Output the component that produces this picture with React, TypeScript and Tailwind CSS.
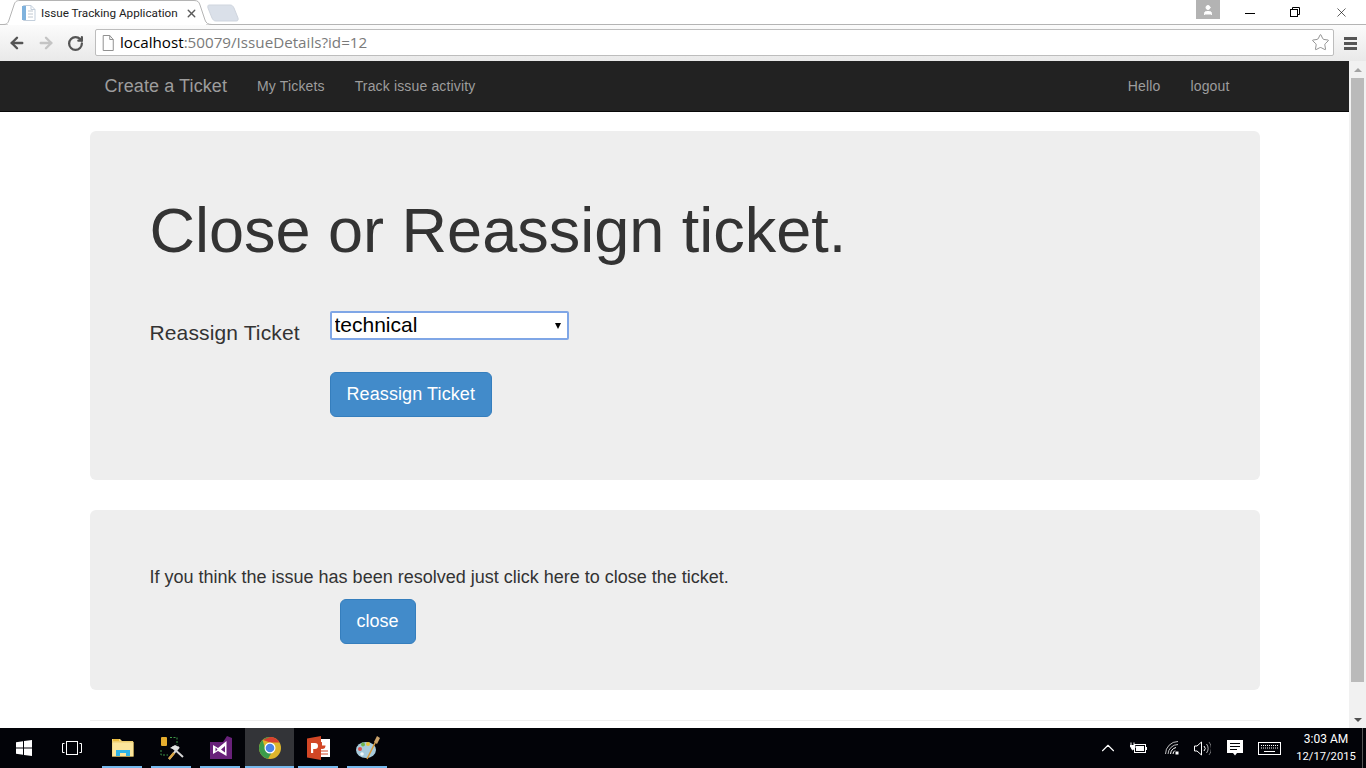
import React from 'react';
import { ArrowLeft, ArrowRight, RotateCw, Star, X, ChevronUp, User } from 'lucide-react';

const sans = "font-['Liberation_Sans',Arial,sans-serif]";

const NAV_LEFT = ['My Tickets', 'Track issue activity'];
const NAV_RIGHT = ['Hello', 'logout'];

const TabShape = () => (
  <svg className="absolute left-0 top-0" width="245" height="25" viewBox="0 0 245 25">
    <path d="M0 24.500 H3 C7 24.500 8 23 9 20 L14 5 C15 2 16 .5 20 .5 H194 C198 .5 199 2 200 5 L205 20 C206 23 208 24.500 212 24.500" fill="#fff" stroke="#b4b4b4" />
    <rect x="8" y="23" width="198" height="2" fill="#fff" />
    <path d="M209 5 H230 C232 5 233 6 234 8 L238 18 C238.500 20 238 21 236 21 H216 C214 21 213 20 212 18 L208 8 C207.500 6 208 5 209 5Z" fill="#dae0e9" stroke="#cfd5de" />
  </svg>
);

const PageFile = ({ blue }: { blue?: boolean }) => (
  <svg width={blue ? 16 : 14} height="16" viewBox="0 0 16 16" preserveAspectRatio="none">
    <path d="M2.500 .5 H10 L14 4.500 V15.500 H2.500Z" fill="#fff" stroke={blue ? '#c3cfdc' : '#8a8a8a'} />
    {blue && <rect x="1" y="1" width="4" height="14" fill="#7fb2dd" />}
    {blue && <path d="M7 6 H12 M7 9 H12 M7 12 H12" stroke="#c0c8d0" />}
    <path d="M10 .5 V4.500 H14" fill="none" stroke={blue ? '#c3cfdc' : '#8a8a8a'} />
  </svg>
);

const WinLogo = () => (
  <svg width="16" height="16" viewBox="0 0 16 16" fill="#fff">
    <path d="M0 2.300 L7 1.300 V7.500 H0Z M8 1.100 L16 0 V7.500 H8Z M0 8.500 H7 V14.700 L0 13.700Z M8 8.500 H16 V16 L8 14.900Z" />
  </svg>
);

const TaskView = () => (
  <svg width="20" height="14" viewBox="0 0 20 14" fill="none" stroke="#fff">
    <rect x="4.500" y=".5" width="11" height="13" />
    <path d="M2.500 2.500 H.5 V11.500 H2.500 M17.500 2.500 H19.500 V11.500 H17.500" />
  </svg>
);

const Explorer = () => (
  <svg width="22" height="20" viewBox="0 0 22 20">
    <path d="M0 1 H8 L10 3 H21 V18 H0Z" fill="#f6d77a" />
    <rect x="0" y="4" width="21.500" height="14.500" fill="#fbe59b" stroke="#d9b650" strokeWidth=".5" />
    <path d="M1 1 H7 V3 H1Z" fill="#e8b93c" />
    <path d="M4 18 V12 H18 V18 H14 V15 H8 V18Z" fill="#2fb3e6" />
  </svg>
);

const BuildTools = () => (
  <svg width="24" height="24" viewBox="0 0 24 24">
    <rect x="1" y="1" width="6" height="9" rx="1" fill="#e5ad2e" />
    <path d="M10 1.500 H17 V9" fill="none" stroke="#3f9a48" strokeDasharray="2 1.500" />
    <path d="M1 14 V19 H8" fill="none" stroke="#3f9a48" strokeDasharray="2 1.500" />
    <path d="M9 23 L19 11 M12 11 L23 21" stroke="#d6d6d6" strokeWidth="2" />
    <path d="M9 23 L14 17" stroke="#d9a441" strokeWidth="2.500" />
    <path d="M10 12 L15 9 L19 11 L16 14Z" fill="#e4e4e4" />
  </svg>
);

const VisualStudio = () => (
  <svg width="22" height="24" viewBox="0 0 22 24">
    <path d="M0 6 H13 L17 0 L22 2 V23 H0Z" fill="#68217a" />
    <path d="M3 9 L8 12 L16.500 5 V20 L8 15 L3 18Z" fill="#fff" />
    <path d="M5.500 11.500 L7.500 13.500 L5.500 15.500Z M15 10 L11 13.500 L15 16.500Z" fill="#68217a" />
  </svg>
);

const ChromeLogo = () => (
  <svg width="22" height="22" viewBox="0 0 22 22">
    <circle cx="11" cy="11" r="11" fill="#ddb52d" />
    <path d="M11 0 A11 11 0 0 1 20.500 5.500 H11 L4 3 A11 11 0 0 1 11 0Z" fill="#d8402f" />
    <path d="M11 0 A11 11 0 0 0 1.500 16.500 A11 11 0 0 0 9 21.800 L13 15 L6 11 L3.500 3Z" fill="#3b9c4b" />
    <circle cx="11" cy="11" r="5.500" fill="#fff" />
    <circle cx="11" cy="11" r="4.300" fill="#4a83e8" />
  </svg>
);

const PowerPoint = () => (
  <svg width="23" height="24" viewBox="0 0 23 24">
    <rect x="10" y="3" width="13" height="18" fill="#fff" />
    <path d="M15 6 A3.500 3.500 0 1 0 18.500 9.500 H15Z" fill="#d24726" />
    <path d="M14 15 H21 M14 18 H21" stroke="#d24726" />
    <path d="M0 2.500 L14 0 V24 L0 21.500Z" fill="#d24726" />
    <path d="M4 17 V7 H8 A3 3 0 0 1 8 13 H6.200 V17Z" fill="#fff" />
  </svg>
);

const Paint = () => (
  <svg width="24" height="24" viewBox="0 0 24 24">
    <ellipse cx="10" cy="14" rx="10" ry="8" fill="#a7cbdc" />
    <circle cx="4" cy="13" r="2" fill="#d9534f" />
    <circle cx="7" cy="8.500" r="2" fill="#6cb34f" />
    <circle cx="12" cy="8" r="2" fill="#e6c13a" />
    <circle cx="6" cy="18" r="1.800" fill="#eef6fa" />
    <path d="M11 23 L20 5" stroke="#d99a3c" strokeWidth="1.500" />
    <path d="M18 6 L21 0 L24 2 L21 8Z" fill="#c9a26b" />
  </svg>
);

const Battery = () => (
  <svg width="17" height="12" viewBox="0 0 17 12" fill="none" stroke="#fff">
    <path d="M1 .5 V3 M4 .5 V3 M0 3.500 H5 V6 L2.500 8 Z" fill="#fff" />
    <rect x="4.500" y="2.500" width="11" height="8" />
    <rect x="6" y="4" width="8" height="5" fill="#fff" stroke="none" />
    <path d="M16.500 5 V8" />
  </svg>
);

const Wifi = () => (
  <svg width="14" height="14" viewBox="0 0 14 14" fill="none" stroke="#fff">
    <path d="M.5 13 A12.500 12.500 0 0 1 13 .5" opacity=".75" />
    <path d="M3 13 A10 10 0 0 1 13 3.500" opacity=".75" />
    <path d="M5.500 13 A7.500 7.500 0 0 1 11 6.500" />
    <path d="M8 13 A4.500 4.500 0 0 1 10 9.500" />
    <rect x="10.500" y="10.500" width="3" height="3" fill="#fff" stroke="none" />
  </svg>
);

const Volume = () => (
  <svg width="17" height="15" viewBox="0 0 17 15" fill="none" stroke="#fff">
    <path d="M.5 5 H3 L7.500 1 V14 L3 10 H.5Z" />
    <path d="M10 5 A3.500 3.500 0 0 1 10 10" />
    <path d="M12.500 3 A7 7 0 0 1 12.500 12" opacity=".7" />
    <path d="M15 1 A10 10 0 0 1 15 14" opacity=".45" />
  </svg>
);

const ActionCenter = () => (
  <svg width="16" height="16" viewBox="0 0 16 16">
    <path d="M0 0 H16 V13 H10 L8 15.500 L6 13 H0Z" fill="#fff" />
    <path d="M3 3.500 H13 M3 6.500 H13 M3 9.500 H10" stroke="#020308" />
  </svg>
);

const Keyboard = () => (
  <svg width="23" height="13" viewBox="0 0 23 13" fill="none" stroke="#fff">
    <rect x=".5" y=".5" width="22" height="12" />
    <path d="M3 3.500 H20 M3 6 H20" strokeDasharray="1 1" />
    <path d="M6 9.500 H17" />
  </svg>
);

const TASK_APPS = [
  { id: 'explorer', icon: <Explorer /> },
  { id: 'tools', icon: <BuildTools /> },
  { id: 'vs', icon: <VisualStudio /> },
  { id: 'chrome', icon: <ChromeLogo />, active: true },
  { id: 'ppt', icon: <PowerPoint /> },
  { id: 'paint', icon: <Paint /> },
];

const ScrollBar = () => (
  <div className="w-[17px] shrink-0 bg-[#f1f1f1] flex flex-col items-center">
    <div className="h-[17px] flex items-center justify-center">
      <div className="border-x-[4px] border-b-[4px] border-x-transparent border-b-[#a3a3a3]"></div>
    </div>
    <div className="w-[13px] h-[604px] bg-[#bababa]"></div>
    <div className="flex-1"></div>
    <div className="h-[17px] flex items-center justify-center">
      <div className="border-x-[4px] border-t-[4px] border-x-transparent border-t-[#505050]"></div>
    </div>
  </div>
);

export default function App() {
  return (
    <div className={`h-[768px] w-[1366px] overflow-hidden flex flex-col bg-white ${sans}`}>
      {/* Browser chrome */}
      <div className="h-[25px] relative shrink-0 bg-white border-b border-[#b4b4b4]">
        <TabShape />
        <div className="absolute left-[21px] top-[5px] flex items-center">
          <PageFile blue />
          <span className="ml-[4px] w-[144px] text-[11.7px] leading-[16px] text-[#222] font-['Roboto',sans-serif] whitespace-nowrap">Issue Tracking Application</span>
          <X size={13} strokeWidth={2.5} className="ml-0 text-[#5a5a5a]" />
        </div>
        <div className="flex justify-end items-start h-full">
          <div className="w-[24px] h-[19px] bg-[#b3b3b3] flex items-center justify-center mr-[7px]">
            <User size={12} fill="#fff" stroke="#fff" />
          </div>
          <div className="w-[45px] h-[24px] flex items-center justify-center">
            <svg width="10" height="10" viewBox="0 0 10 10"><path d="M0 6.500 H10" stroke="#000" /></svg>
          </div>
          <div className="w-[46px] h-[24px] flex items-center justify-center">
            <svg width="10" height="10" viewBox="0 0 10 10" fill="none" stroke="#000"><path d="M2.500 2.500 V.5 H9.500 V7.500 H7.500" /><rect x=".5" y="2.500" width="7" height="7" /></svg>
          </div>
          <div className="w-[46px] h-[24px] flex items-center justify-center text-black mr-[2px]"><X size={15} strokeWidth={1} /></div>
        </div>
      </div>
      <div className="h-[36px] shrink-0 bg-gradient-to-b from-[#fbfbfb] to-[#e9e9e9] flex items-center pl-[8px]">
        <ArrowLeft size={18} strokeWidth={3.2} className="text-[#555]" />
        <ArrowRight size={18} strokeWidth={3.2} className="text-[#c4c4c4] ml-[11px]" />
        <RotateCw size={17} strokeWidth={3.2} className="text-[#555] ml-[12px]" />
        <div className="ml-[11px] w-[1239px] h-[27px] mb-[1px] bg-white border border-[#bdbdbd] rounded-[2px] flex items-center pl-[5px] pr-[2px]">
          <PageFile />
          <span className="ml-[5px] text-[15.2px] font-['Open_Sans',sans-serif] text-[#7a7a7a] whitespace-nowrap"><span className="text-black">localhost</span>:50079/IssueDetails?id=12</span>
          <Star size={19} strokeWidth={1} className="ml-auto mr-[1px] text-[#777]" />
        </div>
        <svg className="ml-[10px]" width="13" height="13" viewBox="0 0 13 13" fill="#555">
          <rect y="0" width="13" height="3" />
          <rect y="5" width="13" height="3" />
          <rect y="10" width="13" height="3" />
        </svg>
      </div>

      <div className="flex-1 min-h-0 flex">
        <div className="flex-1 min-w-0 overflow-hidden">
          {/* Navbar */}
          <nav className="h-[51px] bg-[#222] border-b border-[#080808]">
            <div className="w-[1170px] mx-auto flex items-center h-[50px] text-[14px] tracking-[0.15px] text-[#9d9d9d]">
              <a className="px-[15px] text-[18px] tracking-[0.1px]">Create a Ticket</a>
              {NAV_LEFT.map((item) => (
                <a key={item} className="px-[15px]">{item}</a>
              ))}
              <div className="ml-auto flex pr-[15px]">
                {NAV_RIGHT.map((item) => (
                  <a key={item} className="px-[15px]">{item}</a>
                ))}
              </div>
            </div>
          </nav>

          <div className="w-[1170px] mx-auto pt-[19px] text-[#333]">
            <div className="h-[349px] bg-[#eee] rounded-[6px] px-[60px] pt-[60px] mb-[30px]">
              <h1 className="text-[63px] leading-[69px] pt-[5px]">Close or Reassign ticket.</h1>
              <div className="flex mt-[46px]">
                <label className="w-[180px] text-[21px] tracking-[0.13px] leading-[30px] pt-[7px]">Reassign Ticket</label>
                <div>
                  <div className="relative w-[239px]">
                    <select defaultValue="technical" className="block w-full h-[29px] pl-[3px] pb-[3px] bg-white text-black text-[21px] leading-[24px] border-2 border-[#7fa6e6] rounded-[2px] appearance-none">
                      <option>technical</option>
                    </select>
                    <div className="absolute right-[8px] top-[12px] border-x-[3.5px] border-t-[6px] border-x-transparent border-t-black"></div>
                  </div>
                  <button className="mt-[32px] h-[45px] px-[16px] text-[18px] tracking-[0.1px] text-white bg-[#428bca] border border-[#357ebd] rounded-[6px]">Reassign Ticket</button>
                </div>
              </div>
            </div>

            <div className="h-[180px] bg-[#eee] rounded-[6px] px-[60px] pt-[54px] mb-[30px]">
              <p className="text-[18px] leading-[26px]">If you think the issue has been resolved just click here to close the ticket.</p>
              <button className="block ml-[190px] mt-[9px] h-[45px] px-[16px] text-[18px] text-white bg-[#428bca] border border-[#357ebd] rounded-[6px]">close</button>
            </div>
            <hr className="border-t border-[#eee]" />
          </div>
        </div>
        <ScrollBar />
      </div>

      {/* Taskbar */}
      <div className="h-[40px] shrink-0 bg-[#020308] flex items-center relative">
        <div className="w-[48px] h-full flex items-center justify-center"><WinLogo /></div>
        <div className="w-[48px] h-full flex items-center justify-center"><TaskView /></div>
        <div className="ml-[2px] flex h-full">
          {TASK_APPS.map((app) => (
            <div key={app.id} className={`w-[49px] h-full flex items-center justify-center relative ${app.active ? 'bg-[#333438]' : ''}`}>
              {app.icon}
              <div className={`absolute bottom-0 h-[2px] bg-[#76b9ed] ${app.active ? 'inset-x-0' : 'left-[4px] w-[40px]'}`}></div>
            </div>
          ))}
        </div>
        <div className="ml-auto flex items-center h-full">
          <ChevronUp size={22} strokeWidth={1.2} className="text-white" />
          <div className="ml-[11px]"><Battery /></div>
          <div className="ml-[18px]"><Wifi /></div>
          <div className="ml-[15px]"><Volume /></div>
          <div className="ml-[16px]"><ActionCenter /></div>
          <div className="ml-[15px]"><Keyboard /></div>
          <div className="w-[78px] ml-[3px] pl-[6px] text-center leading-[18px] text-white font-['Roboto',sans-serif]">
            <div className="text-[12px]">3:03 AM</div>
            <div className="text-[11.2px]">12/17/2015</div>
          </div>
          <div className="w-px h-full bg-[#555] mr-[3px]"></div>
        </div>
      </div>
    </div>
  );
}
